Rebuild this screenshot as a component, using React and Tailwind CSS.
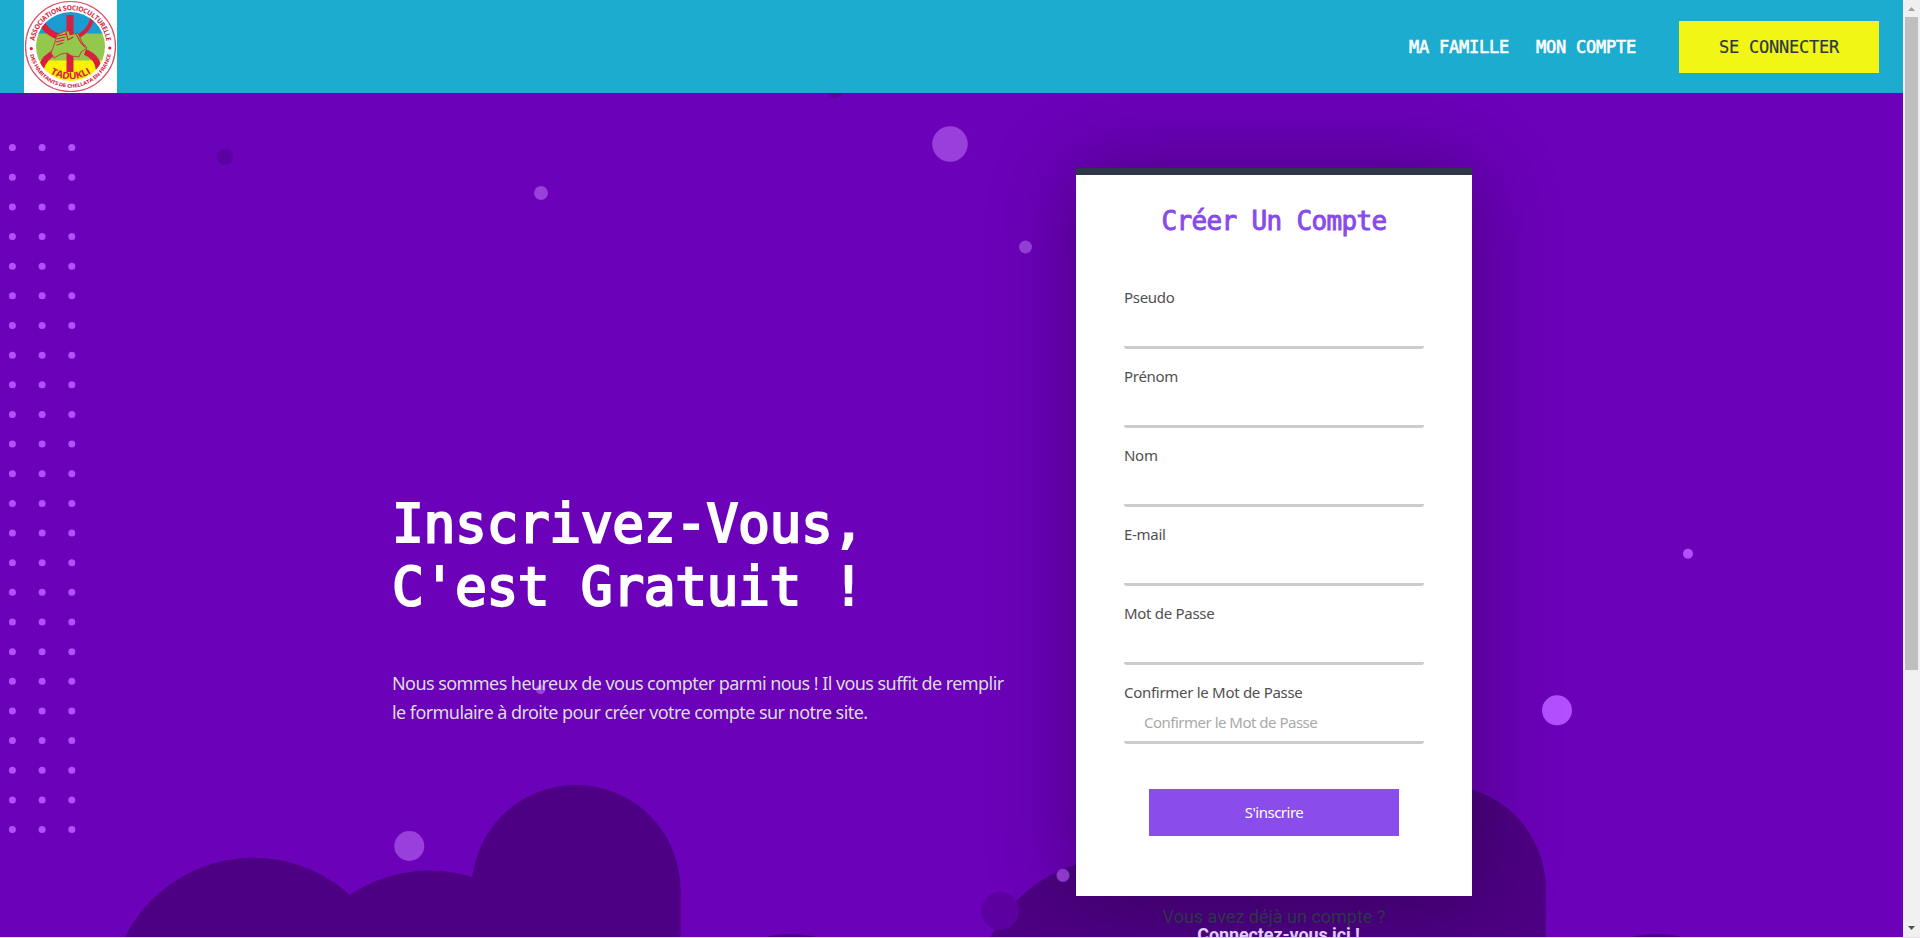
const MONO = "font-['DejaVu_Sans_Mono',monospace]";

const dotColumns = [12.4, 42.1, 71.8];
const dotRows = Array.from({ length: 24 }, (_, i) => 147.6 + i * 29.65);

const bubbles = [
  { x: 225, y: 157, r: 8, fill: '#5d00a1' },
  { x: 834.5, y: 90, r: 8, fill: '#5d00a1' },
  { x: 541, y: 193, r: 7, fill: '#983fdc' },
  { x: 950, y: 144, r: 17.8, fill: '#983fdc' },
  { x: 1025.5, y: 247, r: 6.5, fill: '#983fdc' },
  { x: 1688, y: 553.7, r: 5, fill: '#b34fff' },
  { x: 1557, y: 710.3, r: 15, fill: '#b34fff' },
  { x: 409.3, y: 846, r: 15, fill: '#983fdc' },
  { x: 540.7, y: 689.5, r: 4.7, fill: '#983fdc' },
  { x: 835.7, y: 714, r: 6, fill: '#5d00a1' },
  { x: 1063, y: 875.3, r: 6.5, fill: '#983fdc' },
  { x: 1000, y: 911, r: 18.9, fill: '#5d00a1' },
];

function Cloud({ x }) {
  return (
    <g fill="#4d0083" transform={`translate(${x} 0)`}>
      <circle cx="253.5" cy="1001.5" r="143.8" />
      <circle cx="430" cy="1014.6" r="144" />
      <circle cx="576" cy="889.5" r="104.5" />
      <rect x="471.5" y="889.5" width="209" height="60" />
      <circle cx="791" cy="1039" r="105" />
    </g>
  );
}

function Backdrop() {
  return (
    <svg className="absolute inset-0 h-full w-full" viewBox="0 93 1903 844" preserveAspectRatio="none">
      <Cloud x={0} />
      <Cloud x={865.5} />
      {dotRows.map((y) => dotColumns.map((x) => <circle key={`${x}-${y}`} cx={x} cy={y} r="3.5" fill="#b34fff" />))}
      {bubbles.map((b) => (
        <circle key={`${b.x}-${b.y}`} cx={b.x} cy={b.y} r={b.r} fill={b.fill} />
      ))}
    </svg>
  );
}

function Logo() {
  return (
    <svg className="block h-[93px] w-[93px] bg-white" viewBox="0 0 93 93">
      <defs>
        <clipPath id="disc"><circle cx="46.5" cy="46.5" r="34.5" /></clipPath>
        <path id="arcTop" d="M10.200 46.500a36.300 36.300 0 0 1 72.600 0" />
        <path id="arcBottom" d="M5.400 46.500a41.100 41.100 0 0 0 82.200 0" />
        <path id="arcName" d="M8.500 41a38 38 0 0 0 76 0" />
      </defs>
      <circle cx="46.5" cy="46.5" r="45" fill="none" stroke="#dc4a60" strokeWidth="1.2" />
      <g clipPath="url(#disc)">
        <rect width="93" height="34" fill="#1a9bd2" />
        <rect y="33.5" width="93" height="27.5" fill="#92c84b" />
        <rect y="60.5" width="93" height="33" fill="#fff200" />
        <g fill="none" stroke="#d71f3f" strokeWidth="6">
          <path d="M46 15v57" strokeWidth="7" />
          <path d="M17 21c4 9 10 14 20 16" />
          <path d="M68 19c-2 9-7 14-15 18" strokeWidth="4" />
          <path d="M17 69c2-9 7-14 15-17" />
          <path d="M75 70c-1-9-6-15-14-18" />
        </g>
        <path d="M33 35l8-4 4 0 1 4 8-2 4 9 5 6-6 4-2 5-7-1-5-3-6 1-7 4-3-5 3-8z" fill="#92c84b" stroke="#d71f3f" strokeWidth="0.8" />
        <path d="M34 36l8-2M33 39l8-2M32 42l8-2M33 45l6-2M42 32l2 8M44 40l5-3M52 34l5 9 4 4" fill="none" stroke="#d71f3f" strokeWidth="1.1" strokeLinecap="round" />
      </g>
      <circle cx="7.3" cy="48.6" r="1.6" fill="#d71f3f" />
      <circle cx="85.8" cy="48" r="1.6" fill="#d71f3f" />
      <g fill="#d4213f" className="font-['Open_Sans',sans-serif] font-bold" textAnchor="middle">
        <text fontSize="6.9"><textPath href="#arcTop" startOffset="50%" textLength="103" lengthAdjust="spacingAndGlyphs">ASSOCIATION SOCIOCULTURELLE</textPath></text>
        <text fontSize="5"><textPath href="#arcBottom" startOffset="50%" textLength="113" lengthAdjust="spacingAndGlyphs">DES HABITANTS DE CHELLATA EN FRANCE</textPath></text>
        <text fontSize="9.5"><textPath href="#arcName" startOffset="50%" textLength="43" lengthAdjust="spacingAndGlyphs">TADUKLI</textPath></text>
      </g>
    </svg>
  );
}

function Header() {
  return (
    <header className={`flex h-[93px] items-center bg-[#1bacd0] pr-6 pl-6 text-[17px] tracking-[-0.235px] ${MONO}`}>
      <Logo />
      <nav className="mt-0.5 mr-[43px] ml-auto flex gap-[27px] text-white [-webkit-text-stroke:0.6px_white]">
        <a>MA FAMILLE</a>
        <a>MON COMPTE</a>
      </nav>
      <button className="h-[52px] w-[200px] bg-[#f1f614] pt-0.5 text-[#2d3748] [-webkit-text-stroke:0.2px_#2d3748]">SE CONNECTER</button>
    </header>
  );
}

function Field({ label, placeholder }) {
  return (
    <label className="block h-[79px] text-[#505050]">
      <span className="block h-[22px] text-[15px] leading-[22px] tracking-[-0.29px]">{label}</span>
      <input
        placeholder={placeholder}
        className="block h-[41px] w-[300px] rounded-[3px] border-b-[3px] border-[#ccc] px-5 text-[15px] tracking-[-0.5px] placeholder:text-[#aaa]"
      />
    </label>
  );
}

function SignupCard() {
  return (
    <div className="h-[728px] w-[396px] border-t-[7px] border-[#2d3748] bg-white px-12 shadow-[0_0_80px_rgba(0,0,0,0.32)]">
      <h2 className={`mt-[29px] text-center text-[26px] leading-[34px] tracking-[-0.65px] text-[#884aea] [-webkit-text-stroke:0.9px_#884aea] ${MONO}`}>
        Créer Un Compte
      </h2>
      <form className="mt-[48px]">
        <Field label="Pseudo" />
        <Field label="Prénom" />
        <Field label="Nom" />
        <Field label="E-mail" />
        <Field label="Mot de Passe" />
        <Field label="Confirmer le Mot de Passe" placeholder="Confirmer le Mot de Passe" />
        <button type="button" className="mx-auto mt-[29px] block h-[47px] w-[250px] bg-[#8a4dec] text-[15px] tracking-[-0.5px] text-white">
          S'inscrire
        </button>
      </form>
    </div>
  );
}

function Scrollbar() {
  return (
    <div className="flex h-[937px] w-[17px] flex-col items-center bg-[#f0f0f0]">
      <svg className="h-[17px] w-[17px]" viewBox="0 0 17 17"><path d="M5 11h7L8.500 7z" fill="#a0a0a0" /></svg>
      <div className="h-[653px] w-[13px] bg-[#bfbfbf]" />
      <svg className="mt-auto h-[17px] w-[17px]" viewBox="0 0 17 17"><path d="M5 6h7L8.500 10z" fill="#505050" /></svg>
    </div>
  );
}

export default function App() {
  return (
    <div className="h-[938px] w-[1920px] overflow-hidden bg-[#eadcea] font-['Noto_Sans',sans-serif]">
      <div className="flex">
        <div className="w-[1903px]">
          <Header />
          <main className="relative h-[844px] overflow-hidden bg-[#6b01b9]">
            <Backdrop />
            <div className="relative flex pl-[392px]">
              <section className="w-[684px] pt-[399px]">
                <h1 className={`text-[53px] leading-[63px] tracking-[-0.45px] whitespace-pre text-white [-webkit-text-stroke:2.2px_white] ${MONO}`}>
                  {"Inscrivez-Vous,\nC'est Gratuit !"}
                </h1>
                <p className="mt-[51px] text-[18px] leading-[29px] tracking-[-0.565px] whitespace-pre text-[#ddd]">
                  {'Nous sommes heureux de vous compter parmi nous ! Il vous suffit de remplir\nle formulaire à droite pour créer votre compte sur notre site.'}
                </p>
              </section>
              <section className="flex flex-col items-center pt-[75px]">
                <SignupCard />
                <div className="relative mt-[12px] text-center font-['Roboto',sans-serif] text-[18px] leading-[18px]">
                  <p className="text-[#2d3748]">Vous avez déjà un compte ?</p>
                  <a className="ml-[9px] block font-bold tracking-[-0.1px] text-[#e2ccff]">Connectez-vous ici !</a>
                </div>
              </section>
            </div>
          </main>
        </div>
        <Scrollbar />
      </div>
    </div>
  );
}
